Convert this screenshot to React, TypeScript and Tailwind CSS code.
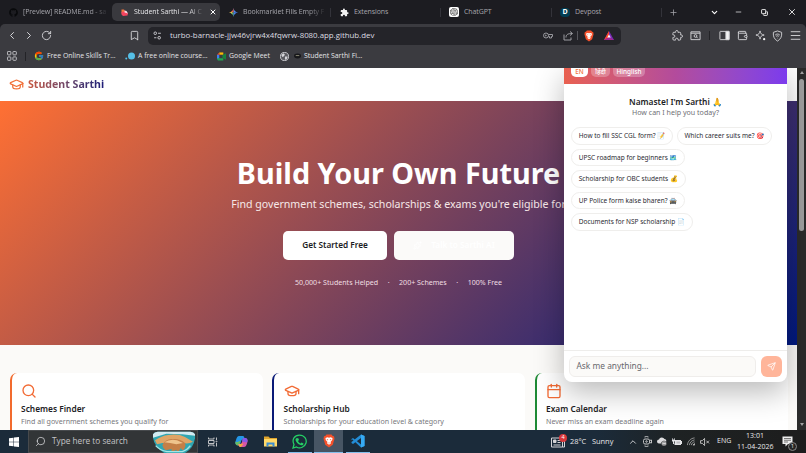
import React from 'react';
import {
  Bookmark,
  Calendar,
  ChevronDown,
  ChevronLeft,
  ChevronRight,
  ChevronUp,
  Copy,
  GraduationCap,
  Menu,
  Minus,
  Plus,
  RotateCw,
  Search,
  Send,
  Sparkles,
  Wallet,
  X,
} from 'lucide-react';
import { FaGithub } from 'react-icons/fa';
import { FcGoogle } from 'react-icons/fc';
import { SiOpenai } from 'react-icons/si';

const BraveIcon = ({ className }: { className?: string }) => (
  <svg viewBox="0 0 24 28" className={className}>
    <path d="M7 1h10l2.5 3 2.5.5 1 5-3.500 12L12 27 4.500 21.500 1 9.500l1-5L4.500 4z" fill="#f4502a" />
    <path d="M5 8l4-1.500 3 1 3-1L19 8l-.5 4-3.500 4 1 2.500-4 3-4-3 1-2.500-3.500-4z" fill="#fff" />
    <path d="M7 10l3.500 1-1 2zM17 10l-3.500 1 1 2zM10 17.500h4l-2 1.500z" fill="#f4502a" />
  </svg>
);

const puzzlePath =
  'M20.500 11H19V7a2 2 0 0 0-2-2h-4V3.500a2.500 2.500 0 0 0-5 0V5H4a2 2 0 0 0-2 2v3.800h1.500a2.700 2.700 0 0 1 0 5.400H2V20a2 2 0 0 0 2 2h3.800v-1.500a2.700 2.700 0 0 1 5.400 0V22H17a2 2 0 0 0 2-2v-4h1.500a2.500 2.500 0 0 0 0-5z';

const PuzzleSolid = () => (
  <svg viewBox="0 0 24 24" className="h-[9px] w-[9px]" fill="#f1f1f1">
    <path d={puzzlePath} />
  </svg>
);

const SparkColor = () => (
  <svg viewBox="0 0 24 24" className="h-[9px] w-[9px]">
    <path d="M12 0c1 7 5 11 12 12H12z" fill="#4f8df7" />
    <path d="M12 0C11 7 7 11 0 12h12z" fill="#f0654a" />
    <path d="M0 12c7 1 11 5 12 12V12z" fill="#62b568" />
    <path d="M24 12c-7 1-11 5-12 12V12z" fill="#4a86f0" />
    <path d="M0 12c4-.5 6-1.500 8-3v6c-2-1.500-4-2.500-8-3z" fill="#e8c34a" />
  </svg>
);

const tabs = [
  { title: '[Preview] README.md - sa', width: 'w-[112px]', icon: <FaGithub className="h-[9px] w-[9px] text-[#08090b]" />, pad: 'pl-[9px]', fade: true },
  {
    title: 'Student Sarthi — AI C',
    width: 'w-[108px]',
    active: true,
    fade: true,
    pad: 'pl-[8px]',
    icon: (
      <svg viewBox="0 0 18 18" className="h-[9px] w-[9px]">
        <path d="M3 3l5 0 3 5-3 3H3z" fill="#f4773e" />
        <path d="M3 8l6-1 7 3-1 5-9 1-3-3z" fill="#f3445f" />
        <path d="M9 5l4 1 3 5-7-2z" fill="#f7d9e6" />
      </svg>
    ),
  },
  { title: 'Bookmarklet Fills Empty F', width: 'w-[111px]', icon: <SparkColor />, pad: 'pl-[9px]', fade: true },
  { title: 'Extensions', width: 'w-[110px]', icon: <PuzzleSolid />, pad: 'pl-[9px]' },
  {
    title: 'ChatGPT',
    width: 'w-[111px]',
    pad: 'pl-[8px]',
    icon: (
      <span className="flex h-[10px] w-[10px] items-center justify-center rounded-[2px] bg-white">
        <SiOpenai className="h-[8px] w-[8px] text-[#333]" />
      </span>
    ),
  },
  {
    title: 'Devpost',
    width: 'w-[110px]',
    pad: 'pl-[8px]',
    icon: (
      <span className="flex h-[9px] w-[10px] items-center justify-center rounded-[4px] bg-[#003e54] text-[7px] font-bold text-white">D</span>
    ),
  },
];

const TabStrip = () => (
  <div className="flex h-[24px] items-center bg-[#1c1c21] text-[#a6a6ac]">
    {tabs.map((tab) => (
      <div
        key={tab.title}
        className={`relative flex h-[18px] shrink-0 items-center gap-[5px] ${tab.width} ${tab.pad} ${
          tab.active ? 'rounded-[5px] bg-[#39393e] text-[#e4e4e7]' : ''
        }`}
      >
        {tab.icon}
        <span
          className={`text-[7px] tracking-[-0.1px] whitespace-nowrap ${tab.active ? 'w-[68px]' : ''} ${
            tab.fade ? '[mask-image:linear-gradient(90deg,#000_80%,rgba(0,0,0,0.15))]' : ''
          }`}
        >
          {tab.title}
        </span>
        {tab.active ? <X className="ml-[2px] h-[8px] w-[8px] text-white" strokeWidth={3} /> : null}
        {!tab.active && tab.width !== 'w-[112px]' && <i className="absolute right-0 h-[9px] w-px bg-[#33333a]" />}
      </div>
    ))}
    <div className="flex w-[22px] justify-center"><Plus className="h-[9px] w-[9px]" /></div>
    <div className="ml-[17px] flex w-[26px] justify-center"><ChevronDown className="h-[9px] w-[9px] text-white" strokeWidth={3} /></div>
    <div className="flex w-[22px] justify-center"><Minus className="h-[8px] w-[9px] text-white" /></div>
    <div className="flex w-[30px] justify-center"><Copy className="h-[7px] w-[7px] rotate-90 -scale-x-100 text-white" strokeWidth={3} /></div>
    <div className="flex w-[25px] justify-center"><X className="h-[10px] w-[10px] text-white" strokeWidth={2} /></div>
  </div>
);

const Toolbar = () => (
  <div className="flex h-[23px] items-center rounded-t-[5px] bg-[#3b3b40] text-[#d4d4d8]">
    <ChevronLeft className="ml-[6px] h-[13px] w-[12px] shrink-0" />
    <ChevronRight className="ml-[5px] h-[13px] w-[12px] shrink-0" />
    <RotateCw className="ml-[6px] h-[11px] w-[11px] shrink-0" />
    <Bookmark className="ml-[77px] h-[11px] w-[11px] shrink-0" />
    <div className="ml-[8px] flex h-[18px] w-[473px] shrink-0 items-center rounded-[5px] bg-[#242429]">
      <svg viewBox="0 0 16 16" className="ml-[5px] h-[9px] w-[9px]" fill="none" stroke="currentColor" strokeWidth="1.600">
        <circle cx="4" cy="4" r="2.300" />
        <path d="M9 4h5M2 12h4" />
        <circle cx="11" cy="12" r="2.300" />
      </svg>
      <span className="ml-[8px] w-[206px] text-[7.850px] whitespace-nowrap text-[#dcdce0]">turbo-barnacle-jjw46vjrw4x4fqwrw-8080.app.github.dev</span>
      <svg viewBox="0 0 20 14" className="ml-[167px] h-[7px] w-[10px] shrink-0" fill="none" stroke="#a5a5aa" strokeWidth="1.800">
        <circle cx="6" cy="7" r="5" />
        <path d="M11 5h8v4h-2v3h-4V9h-2" />
        <circle cx="5.500" cy="7" r="1" />
      </svg>
      <svg viewBox="0 0 20 20" className="ml-[10px] h-[10px] w-[10px] shrink-0" fill="none" stroke="#a5a5aa" strokeWidth="1.900">
        <path d="M2 7v11h14v-5M6 13c0-6 4-8 12-8M14 1l5 4-5 4" />
      </svg>
      <i className="ml-[4px] h-[9px] w-px bg-[#56565c]" />
      <BraveIcon className="ml-[6px] h-[12px] w-[10px]" />
      <svg viewBox="0 0 20 18" className="ml-[10px] h-[9px] w-[10px]">
        <path d="M10 0l10 18H0z" fill="#7a2bb5" />
        <path d="M10 0L0 18l10-6z" fill="#ff4724" />
        <path d="M0 18h20l-10-6z" fill="#a0278f" />
        <path d="M10 7l3.500 6h-7z" fill="#fff" />
      </svg>
    </div>
    <svg viewBox="0 0 24 24" className="ml-[51px] h-[11px] w-[11px] shrink-0" fill="none" stroke="currentColor" strokeWidth="2">
      <path d={puzzlePath} />
    </svg>
    <svg viewBox="0 0 24 24" className="ml-[7px] h-[11px] w-[11px] shrink-0" fill="none" stroke="currentColor" strokeWidth="2">
      <path d="M2 4h20v17H2zM2 7h20" />
      <circle cx="12" cy="13" r="3" />
      <path d="M14 15l3 3" />
    </svg>
    <i className="ml-[8px] h-[9px] w-px shrink-0 bg-[#232327]" />
    <svg viewBox="0 0 24 24" className="ml-[9px] h-[11px] w-[11px] shrink-0" fill="none" stroke="currentColor" strokeWidth="2">
      <rect x="2" y="3" width="20" height="18" rx="1" />
      <path d="M15 3h7v18h-7z" fill="#f4f4f5" />
    </svg>
    <Wallet className="ml-[7px] h-[11px] w-[11px] shrink-0" />
    <svg viewBox="0 0 24 24" className="ml-[7px] h-[11px] w-[11px] shrink-0" fill="none" stroke="currentColor" strokeWidth="2">
      <path d="M11 2c1 6 3 8 9 9-6 1-8 3-9 9-1-6-3-8-9-9 6-1 8-3 9-9z" />
      <circle cx="20" cy="20" r="2.500" fill="#f4f4f5" stroke="none" />
    </svg>
    <svg viewBox="0 0 24 24" className="ml-[6px] h-[12px] w-[11px] shrink-0" fill="none" stroke="currentColor" strokeWidth="2">
      <path d="M12 1l9 3c1 9-2 15-9 19C5 19 2 13 3 4z" />
      <path d="M7 10c3-3 7-3 10 0M9 13c2-2 4-2 6 0M12 16v1" />
    </svg>
    <Menu className="ml-[6px] h-[13px] w-[13px] shrink-0" strokeWidth={1.700} />
  </div>
);

const BookmarksBar = () => (
  <div className="flex h-[21px] items-center bg-[#3b3b40] pb-[3px] text-[6.900px] whitespace-nowrap text-[#e4e4e7]">
    <svg viewBox="0 0 22 22" className="ml-[7px] h-[10px] w-[10px] shrink-0" fill="none" stroke="#c8c8cc" strokeWidth="2">
      <rect x="1" y="1" width="7.500" height="7.500" rx="1.500" />
      <rect x="13" y="1" width="7.500" height="7.500" rx="1.500" />
      <rect x="1" y="13" width="7.500" height="7.500" rx="1.500" />
      <rect x="13" y="13" width="7.500" height="7.500" rx="1.500" />
    </svg>
    <i className="ml-[8px] h-[9px] w-px bg-[#232327]" />
    <FcGoogle className="ml-[8px] h-[10px] w-[10px] shrink-0" />
    <span className="ml-[3px] w-[67px]">Free Online Skills Tr...</span>
    <svg viewBox="0 0 20 16" className="ml-[11px] h-[8px] w-[10px] shrink-0" fill="#55bfe6">
      <circle cx="13" cy="8" r="7" />
      <circle cx="2.500" cy="13" r="2" />
    </svg>
    <span className="ml-[3px] w-[69px]">A free online course...</span>
    <svg viewBox="0 0 20 18" className="ml-[10px] h-[9px] w-[9px] shrink-0">
      <path d="M5 0h9v5H5z" fill="#fbbc04" />
      <path d="M0 5h5v10H0z" fill="#3d82f2" />
      <path d="M0 13h14v5H2z" fill="#22a652" />
      <path d="M12 6l8-4v14l-8-4z" fill="#17843f" />
      <path d="M0 5l5-5v5z" fill="#ea4335" />
    </svg>
    <span className="ml-[3px] w-[42px]">Google Meet</span>
    <svg viewBox="0 0 20 20" className="ml-[9px] h-[9px] w-[9px] shrink-0">
      <circle cx="10" cy="10" r="9" fill="#5a5a60" stroke="#d4d4d8" strokeWidth="2" />
      <path d="M3 6l5-3 3 3-3 4-3 1zM11 10l6 0-2 6-4 1z" fill="#d4d4d8" />
    </svg>
    <svg viewBox="0 0 16 12" className="ml-[5px] h-[6px] w-[7px] shrink-0">
      <ellipse cx="8" cy="6" rx="8" ry="5.500" fill="#17171a" />
      <path d="M4 5h8" stroke="#94917c" strokeWidth="2" />
    </svg>
    <span className="ml-[3px]">Student Sarthi Fi...</span>
  </div>
);

const features = [
  { title: 'Schemes Finder', text: 'Find all government schemes you qualify for', icon: Search, border: 'border-[#f26b2e]' },
  { title: 'Scholarship Hub', text: 'Scholarships for your education level & category', icon: GraduationCap, border: 'border-[#0a1a78]' },
  { title: 'Exam Calendar', text: 'Never miss an exam deadline again', icon: Calendar, border: 'border-[#1e8a35]' },
];

const SitePage = () => (
  <div className="flex h-full w-[797px] flex-col bg-[#fbfaf8] font-['Noto_Sans',sans-serif]">
    <header className="flex h-[33px] shrink-0 items-center bg-white pl-[9px]">
      <GraduationCap className="h-[15px] w-[15px] text-[#f2713a]" />
      <span className="ml-[4px] bg-gradient-to-r from-[#c9573d] to-[#1d1b78] bg-clip-text pb-px text-[10.600px] leading-[16px] font-bold text-transparent">
        Student Sarthi
      </span>
    </header>

    {/* Hero */}
    <section className="flex h-[244px] shrink-0 flex-col items-center bg-[linear-gradient(135deg,#ff7033,#001980)] pt-[50.500px] whitespace-nowrap text-white">
      <h1 className="text-[28.800px] leading-[41px] font-bold">Build Your Own Future</h1>
      <p className="mt-[2.500px] text-[10.620px] leading-[18px] text-[#f6e8e8]">
        Find government schemes, scholarships &amp; exams you're eligible for
      </p>
      <div className="mt-[18px] flex gap-[7px] text-[8.260px] font-semibold">
        <button className="h-[29px] w-[104px] rounded-[5px] bg-white text-[#1c1c24]">Get Started Free</button>
        <button className="flex h-[29px] w-[120px] items-center justify-center gap-[9px] rounded-[5px] bg-[#fbfaf9] text-white">
          <Sparkles className="h-[9px] w-[9px]" />
          Talk to Sarthi AI
        </button>
      </div>
      <div className="mt-[17px] flex gap-[9.500px] text-[7.080px] leading-[11px] text-[#f0dfe3]">
        <span>50,000+ Students Helped</span>
        <span>·</span>
        <span>200+ Schemes</span>
        <span>·</span>
        <span>100% Free</span>
      </div>
    </section>

    {/* Features */}
    <section className="grid grid-cols-3 gap-[9.400px] pt-[28px] pr-[9.400px] pl-[9.600px]">
      {features.map((f) => (
        <div key={f.title} className={`h-[90px] rounded-[7px] border-l-[2.500px] bg-white pt-[10px] pl-[9.500px] ${f.border}`}>
          <f.icon className="h-[16px] w-[16px] text-[#f26b35]" />
          <h3 className="mt-[3px] text-[8.350px] leading-[13px] font-semibold whitespace-nowrap text-[#1d1d24]">{f.title}</h3>
          <p className="text-[7.080px] leading-[13px] whitespace-nowrap text-[#77777c]">{f.text}</p>
        </div>
      ))}
    </section>
  </div>
);

const prompts = [
  'How to fill SSC CGL form? 📝',
  'Which career suits me? 🎯',
  'UPSC roadmap for beginners 🗺️',
  'Scholarship for OBC students 💰',
  'UP Police form kaise bharen? 🚔',
  'Documents for NSP scholarship 📄',
];

const ChatPanel = () => (
  <div className="absolute top-0 left-[564px] flex h-[313.500px] w-[223px] flex-col overflow-hidden rounded-b-[8px] bg-white font-['Noto_Sans',sans-serif] shadow-[0_10px_30px_rgba(0,0,0,0.28)]">
    <div className="flex h-[16px] shrink-0 items-start gap-[3px] bg-gradient-to-r from-[#e9604f] via-[#b34b9c] to-[#7c3aed] pl-[7px] text-[6.400px] leading-[7px] font-medium text-white">
      <span className="h-[9px] w-[17px] rounded-b-[5px] bg-white text-center text-[#f2713a]">EN</span>
      <span className="h-[9px] w-[19px] rounded-b-[5px] bg-white/25 text-center">हिंदी</span>
      <span className="h-[9px] w-[32px] rounded-b-[5px] bg-white/25 text-center">Hinglish</span>
    </div>
    <div className="flex-1 px-[7px] pt-[11px]">
      <p className="text-center text-[8.400px] leading-[13px] font-semibold text-[#1d1d24]">Namaste! I'm Sarthi 🙏</p>
      <p className="text-center text-[7.080px] leading-[8px] text-[#6f6f75]">How can I help you today?</p>
      <div className="mt-[11px] flex flex-wrap gap-x-[3.500px] gap-y-[4px]">
        {prompts.map((p) => (
          <span key={p} className="flex h-[17.600px] items-center rounded-full border border-[#efeeec] px-[6.800px] text-[6.500px] whitespace-nowrap text-[#2b2b32]">
            {p}
          </span>
        ))}
      </div>
    </div>
    <div className="flex h-[31.500px] shrink-0 items-center gap-[5px] border-t border-[#eeedeb] px-[5px]">
      <div className="flex h-[21.500px] w-[187px] items-center rounded-[6px] border border-[#efedeb] bg-[#fbfaf8] pl-[6.500px] text-[8.350px] text-[#68686d]">
        Ask me anything...
      </div>
      <div className="flex h-[21px] w-[21px] items-center justify-center rounded-[6px] bg-[#ffb59a]">
        <Send className="h-[9px] w-[9px] text-white" />
      </div>
    </div>
  </div>
);

const PageScrollbar = () => (
  <div className="flex w-[9px] flex-col items-center bg-[#2b2b2b]">
    <i className="mt-[3px] border-x-[2.500px] border-b-[3px] border-x-transparent border-b-[#a0a0a0]" />
    <i className="mt-[5px] h-[152px] w-[5px] rounded-full bg-[#9f9f9f]" />
    <i className="mt-auto mb-[4px] border-x-[2.500px] border-t-[3px] border-x-transparent border-t-[#a0a0a0]" />
  </div>
);

const BeachArt = () => (
  <svg viewBox="0 0 126 66" className="mr-[2px] ml-auto h-[22px] w-[42px]">
    <path d="M0 10Q4 2 14 2h98q10 0 14 8v12q-4 30-30 44H34Q4 48 0 20z" fill="#2fa6b2" />
    <path d="M0 10Q4 2 14 2h98q10 0 14 8v4L88 10 40 8 0 20z" fill="#d3eaf0" />
    <path d="M6 28q20-14 40-16 30-4 50 6l24 14q-14 8-28 4l-30 4-34-4-16 4z" fill="#dfa566" />
    <path d="M28 42q8-16 28-18 26-2 40 12 4 10-4 20-6 4-8-6l-8 12q-6 2-6-6l-10 6q-6 0-4-8l-18 4q-8-4-10-16z" fill="#c47f47" />
    <path d="M34 34q18-12 38-6l18 8-20 4q-20-4-36-6z" fill="#efc48d" />
    <path d="M8 44q12 14 34 18h46q16-6 24-18" stroke="#a5e4e3" strokeWidth="4" fill="none" />
  </svg>
);

const Slot = ({ children, active, open }: { children: React.ReactNode; active?: boolean; open?: boolean }) => (
  <div className={`flex h-full w-[29px] flex-col items-center ${active ? 'bg-[#475564]' : ''}`}>
    <div className="flex flex-1 items-center justify-center">{children}</div>
    {open && <i className={`h-px bg-[#84bfec] ${active ? 'w-full' : 'w-[24px]'}`} />}
  </div>
);

const Taskbar = () => (
  <div className="flex h-[23px] items-center bg-[linear-gradient(90deg,#1b2b3a,#1b2b3a_74%,#1e2223_84%,#1d1d1d)] font-['Open_Sans',sans-serif] text-[#e8e8ea]">
    <div className="flex w-[28px] justify-center">
      <svg viewBox="0 0 20 20" className="h-[10px] w-[10px]" fill="#fff">
        <path d="M0 2.500l9-1.200V9.500H0zM10 1.200L20 0v9.500H10zM0 10.500h9v8.200l-9-1.200zM10 10.500h10V20l-10-1.200z" />
      </svg>
    </div>
    <div className="flex h-full w-[170px] items-center border border-[#474a4d] bg-[#323537]">
      <Search className="ml-[6px] h-[11px] w-[11px] -scale-x-100" strokeWidth={1.500} />
      <span className="ml-[6px] text-[8.250px] whitespace-nowrap text-[#c4c4c7]">Type here to search</span>
      <BeachArt />
    </div>
    <Slot>
      <svg viewBox="0 0 20 20" className="h-[10px] w-[10px]" fill="none" stroke="#ddd" strokeWidth="1.700">
        <path d="M1 1v3h11V1M1 19v-3h11v3M1 7h11v6H1zM17 1v5M17 12v7" />
        <circle cx="17" cy="9" r="1" />
      </svg>
    </Slot>
    <Slot>
      <svg viewBox="0 0 26 26" className="h-[13px] w-[13px]">
        <path d="M8 2h8q2 0 3 4l1 3h-5q-2 0-3 4l-2 7H6c-6 0-6-5-4-10Q4 2 8 2z" fill="#2496e5" />
        <path d="M1 13q3 2 6 0l4-1-3 9q-1 1-3 0c-4-1-5-4-4-8z" fill="#68bd67" />
        <path d="M18 24h-8q-2 0-3-4l-1-2h5q2 0 3-4l2-7h4c6 0 6 5 4 10q-2 7-6 7z" fill="#d657a6" />
        <path d="M7 18h5q2 0 2-2l2 3-4 5h-2q-2 0-3-6z" fill="#f6a642" />
        <path d="M16 6h4c5 0 6 4 4 9l-10-2z" fill="#8758e8" />
      </svg>
    </Slot>
    <Slot>
      <svg viewBox="0 0 26 22" className="h-[11px] w-[13px]">
        <path d="M0 1h9l3 3h14v16H0z" fill="#dfa52c" />
        <path d="M0 6h26v15H0z" fill="#ffd968" />
        <path d="M5 13h16v8h-4v-4H9v4H5z" fill="#3c8ed0" />
      </svg>
    </Slot>
    <Slot open>
      <svg viewBox="0 0 30 30" className="h-[15px] w-[15px]">
        <path d="M2 28l2-7C-1 11 5 2 15 2s15 9 13 16-12 13-19 8z" fill="none" stroke="#25cf65" strokeWidth="2.500" />
        <path d="M10 8l3 1 1 3-2 2c1 2 3 4 5 5l2-2 4 2c0 4-4 4-6 3-5-1-9-6-10-10 0-2 1-4 3-4z" fill="#25cf65" />
      </svg>
    </Slot>
    <Slot active open><BraveIcon className="h-[14px] w-[12px]" /></Slot>
    <Slot open>
      <svg viewBox="0 0 28 28" className="h-[14px] w-[14px]">
        <path d="M20 1l7 3v20l-7 3L3 11l-2 1v-2l3-2 16 13V8L4 20l-3-2v-2z" fill="#238dd7" />
        <path d="M20 1l7 3v20l-7 3z" fill="#37aaf2" />
      </svg>
    </Slot>
    <div className="relative ml-[179px] h-[12px] w-[15px] shrink-0">
      <svg viewBox="0 0 28 22" className="mt-[1px] h-[11px] w-[14px]" fill="none" stroke="#d4d4d6" strokeWidth="2">
        <path d="M1 2h22v18H1zM23 8h4v12h-4M5 16h14M13 7h6M13 11h6" />
        <path d="M5 6h5v5H5z" fill="#d4d4d6" />
      </svg>
      <span className="absolute -top-[2px] -right-[1px] flex h-[8px] w-[8px] items-center justify-center rounded-full bg-[#d9373a] text-[5.500px] text-white">4</span>
    </div>
    <span className="ml-[4px] w-[22px] text-[7.400px]">28°C</span>
    <span className="w-[36px] text-[7.400px]">Sunny</span>
    <ChevronUp className="h-[10px] w-[10px]" />
    <svg viewBox="0 0 18 22" className="ml-[5px] h-[11px] w-[9px] shrink-0" fill="none" stroke="#ddd" strokeWidth="1.700">
      <rect x="1" y="6" width="12" height="10" rx="3" />
      <circle cx="7" cy="11" r="1.500" />
      <path d="M13 9l4-1v6l-4-1M3 2q4-2 8 0M3 20q4 2 8 0" />
    </svg>
    <svg viewBox="0 0 20 18" className="ml-[5px] h-[9px] w-[10px] shrink-0">
      <path d="M4 13a4 4 0 0 1 0-8 6 6 0 0 1 11-1 4 4 0 0 1 3 6H9v3z" fill="#dcdcde" />
      <circle cx="14" cy="13" r="5" fill="#dcdcde" stroke="#222" />
      <path d="M11.500 13a2.500 2.500 0 0 1 5-1M16.500 13.500a2.500 2.500 0 0 1-5 .5" stroke="#333" fill="none" />
    </svg>
    <svg viewBox="0 0 20 16" className="ml-[5px] h-[8px] w-[10px] shrink-0" fill="#e4e4e6">
      <path d="M6 4h12v2h2v6h-2v2H5V9h1z" />
      <path d="M0 3h1V0h1v3h2V0h1v3h1v3L4 8v4H2V8L0 6z" />
      <path d="M9 7h7v4H9z" fill="#bdbdc0" />
    </svg>
    <svg viewBox="0 0 20 20" className="ml-[5px] h-[9px] w-[8px] shrink-0" fill="none" stroke="#bbb" strokeWidth="1.800">
      <path d="M1 19C2 9 9 2 19 1M6 19C7 12 12 7 19 6M11 19c0-4 4-8 8-8" />
      <path d="M15 19l4-4v4z" fill="#ddd" />
    </svg>
    <svg viewBox="0 0 22 18" className="ml-[5px] h-[8px] w-[10px] shrink-0" fill="none" stroke="#ddd" strokeWidth="1.800">
      <path d="M1 6h4l5-5v16l-5-5H1zM14 6l6 6M20 6l-6 6" />
    </svg>
    <span className="ml-[7px] w-[20px] text-[7px]">ENG</span>
    <div className="w-[36px] shrink-0 text-center text-[7px] leading-[10.500px] whitespace-nowrap">
      <div>13:01</div>
      <div>11-04-2026</div>
    </div>
    <div className="relative ml-[9px]">
      <svg viewBox="0 0 22 22" className="h-[11px] w-[11px]">
        <path d="M1 1h20v15H12l-5 5v-5H1z" fill="#eee" />
        <path d="M4 5h14M4 8.500h14M4 12h8" stroke="#444" strokeWidth="1.400" />
      </svg>
      <span className="absolute -right-[4px] -bottom-[4px] flex h-[9px] w-[9px] items-center justify-center rounded-full border border-[#888] bg-[#252525] text-[6px]">1</span>
    </div>
  </div>
);

const App: React.FC = () => {
  return (
    <div className="flex h-[453px] w-[806px] flex-col overflow-hidden bg-[#1c1c21] font-['Open_Sans',sans-serif]">
      <TabStrip />
      <Toolbar />
      <BookmarksBar />
      <main className="relative flex h-[362px] overflow-hidden">
        <SitePage />
        <ChatPanel />
        <PageScrollbar />
      </main>
      <Taskbar />
    </div>
  );
};

export default App;
